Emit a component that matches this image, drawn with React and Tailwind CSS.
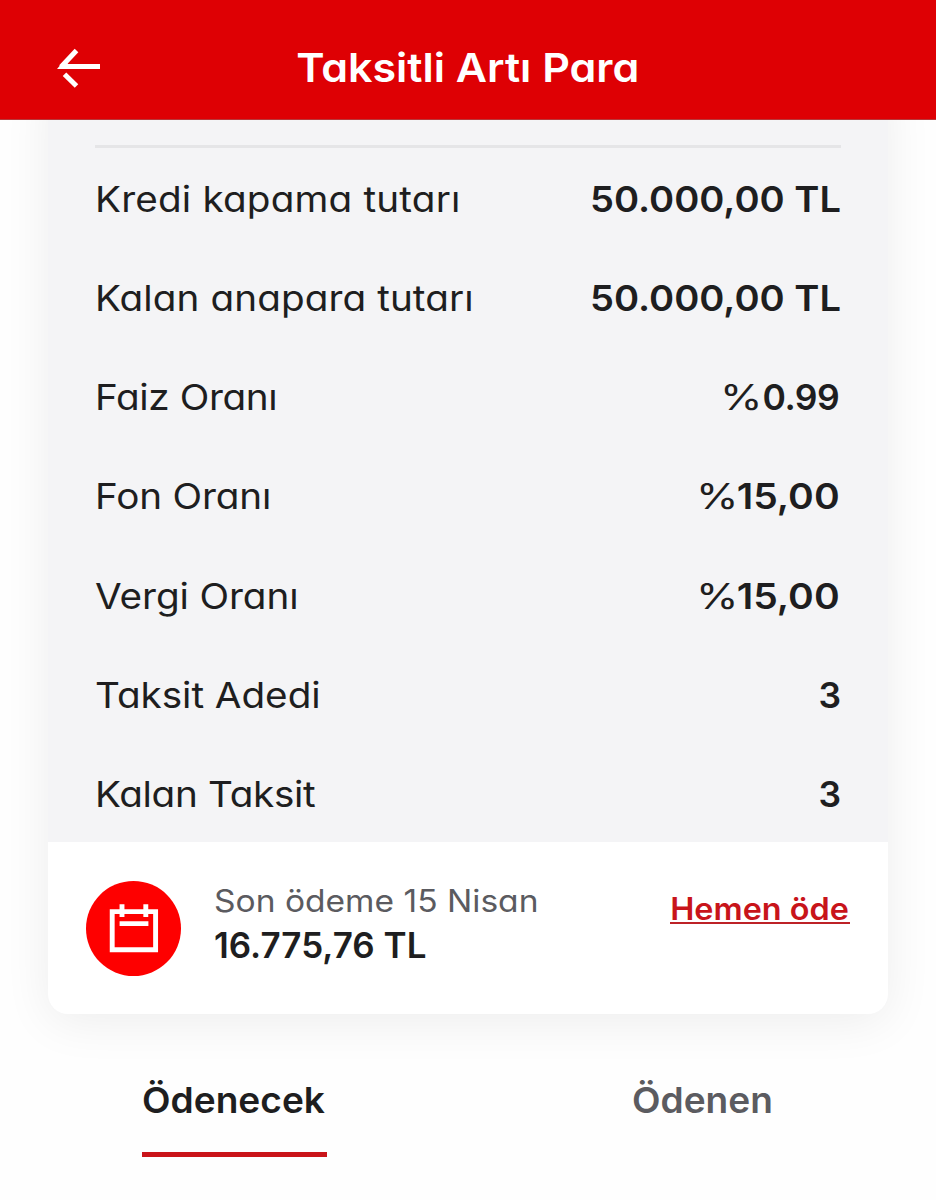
const rows = [
  { label: 'Kredi kapama tutarı', value: '50.000,00 TL', labelClass: 'tracking-[0.15px]', valueClass: 'scale-x-[1.073]' },
  { label: 'Kalan anapara tutarı', value: '50.000,00 TL', labelClass: 'tracking-[0.07px]', valueClass: 'scale-x-[1.073]' },
  { label: 'Faiz Oranı', value: '0.99', percent: true, labelClass: 'tracking-[-0.35px]', valueClass: 'tracking-[-0.6px] mr-[2px]' },
  { label: 'Fon Oranı', value: '15,00', percent: true, labelClass: 'tracking-[-0.15px]', valueClass: 'scale-x-[1.1] ml-[7.5px] mr-px' },
  { label: 'Vergi Oranı', value: '15,00', percent: true, labelClass: 'tracking-[-0.1px]', valueClass: 'scale-x-[1.1] ml-[7.5px] mr-px' },
  { label: 'Taksit Adedi', value: '3', labelClass: 'tracking-[-0.05px]', valueClass: '' },
  { label: 'Kalan Taksit', value: '3', labelClass: 'tracking-[-0.3px]', valueClass: '' },
];

function BackArrow() {
  return (
    <svg width="46" height="42" viewBox="0 0 46 42" fill="none" stroke="#fff" strokeWidth="5">
      <path d="M44 18.5H6" />
      <path d="M20.5 2.5L5 19" />
      <path d="M1 21l5.5-6.5h5V21z" fill="#fff" stroke="none" />
      <path d="M8.5 26.2L20.5 38" />
    </svg>
  );
}

function CalendarIcon() {
  return (
    <svg width="50" height="50" viewBox="0 0 50 50" fill="none" stroke="#fff" strokeWidth="4.9">
      <path d="M3.2 8.6h43.4v38.2H3.2z" />
      <path d="M13 1.2v12.8M36.8 1.2v12.8M10.6 20.6h28.8" />
    </svg>
  );
}

function DetailRow({ label, value, percent, labelClass, valueClass }) {
  return (
    <div className="flex h-[99.2px] items-center justify-between text-[35.5px] leading-none">
      <span className={`origin-left scale-x-[1.09] whitespace-nowrap ${labelClass}`}>{label}</span>
      <span className="flex">
        {percent && <span className="w-[43px] origin-left scale-x-[1.22]">%</span>}
        <span className={`origin-right font-semibold whitespace-nowrap ${valueClass}`}>{value}</span>
      </span>
    </div>
  );
}

export default function App() {
  return (
    <div className="flex h-[1200px] w-[936px] flex-col overflow-hidden bg-[#fefefe] font-['Inter',sans-serif] text-[#1e1e20] [font-feature-settings:'cv11']">
      <header className="z-10 grid h-[120px] shrink-0 grid-cols-[1fr_auto_1fr] items-center border-b border-[#b8383a] bg-[#de0004] pt-[17px]">
        <button className="mt-px ml-[56px] w-[46px]" aria-label="Geri">
          <BackArrow />
        </button>
        <h1 className="scale-x-[1.074] text-[40px] leading-none font-semibold text-white">Taksitli Artı Para</h1>
      </header>

      <section className="mx-12 -mt-12 h-[942px] shrink-0 rounded-[20px] bg-[#f4f4f6] pt-[73px] shadow-[0_8px_48px_rgba(0,0,0,0.07)]">
        <div className="mx-[47px] h-[697.4px] border-t-[3px] border-[#e5e5e7] pt-[2px]">
          {rows.map((row) => (
            <DetailRow key={row.label} {...row} />
          ))}
        </div>

        <div className="flex h-[171.6px] items-start rounded-b-[20px] bg-white px-[38px]">
          <div className="mt-[38.5px] flex size-[95px] items-center justify-center rounded-full bg-[#fe0000]">
            <CalendarIcon />
          </div>
          <div className="mt-[37px] ml-[33px] flex-1">
            <p className="origin-left scale-x-[1.1] text-[30.5px] leading-[44px] text-[#5b5b60]">Son ödeme 15 Nisan</p>
            <p className="text-[35px] leading-[44px] font-semibold">16.775,76 TL</p>
          </div>
          <a className="mt-[51px] h-[31px] w-[180px] border-b-2 border-[#bd2227] text-center text-[31px] leading-[31px] font-semibold whitespace-nowrap text-[#c8141a]">
            <span className="inline-block scale-x-[1.045]">Hemen öde</span>
          </a>
        </div>
      </section>

      <nav className="grid grid-cols-2 justify-items-center text-[35.5px] leading-none font-semibold">
        <button className="mt-[64px] flex h-[79px] w-[185px] justify-center border-b-[5px] border-[#c91419] pt-[5px]">
          <span className="scale-x-[1.045]">Ödenecek</span>
        </button>
        <button className="mt-[64px] flex h-[79px] justify-center pt-[5px] text-[#5b5b60]">
          <span className="scale-x-[1.045]">Ödenen</span>
        </button>
      </nav>
    </div>
  );
}
